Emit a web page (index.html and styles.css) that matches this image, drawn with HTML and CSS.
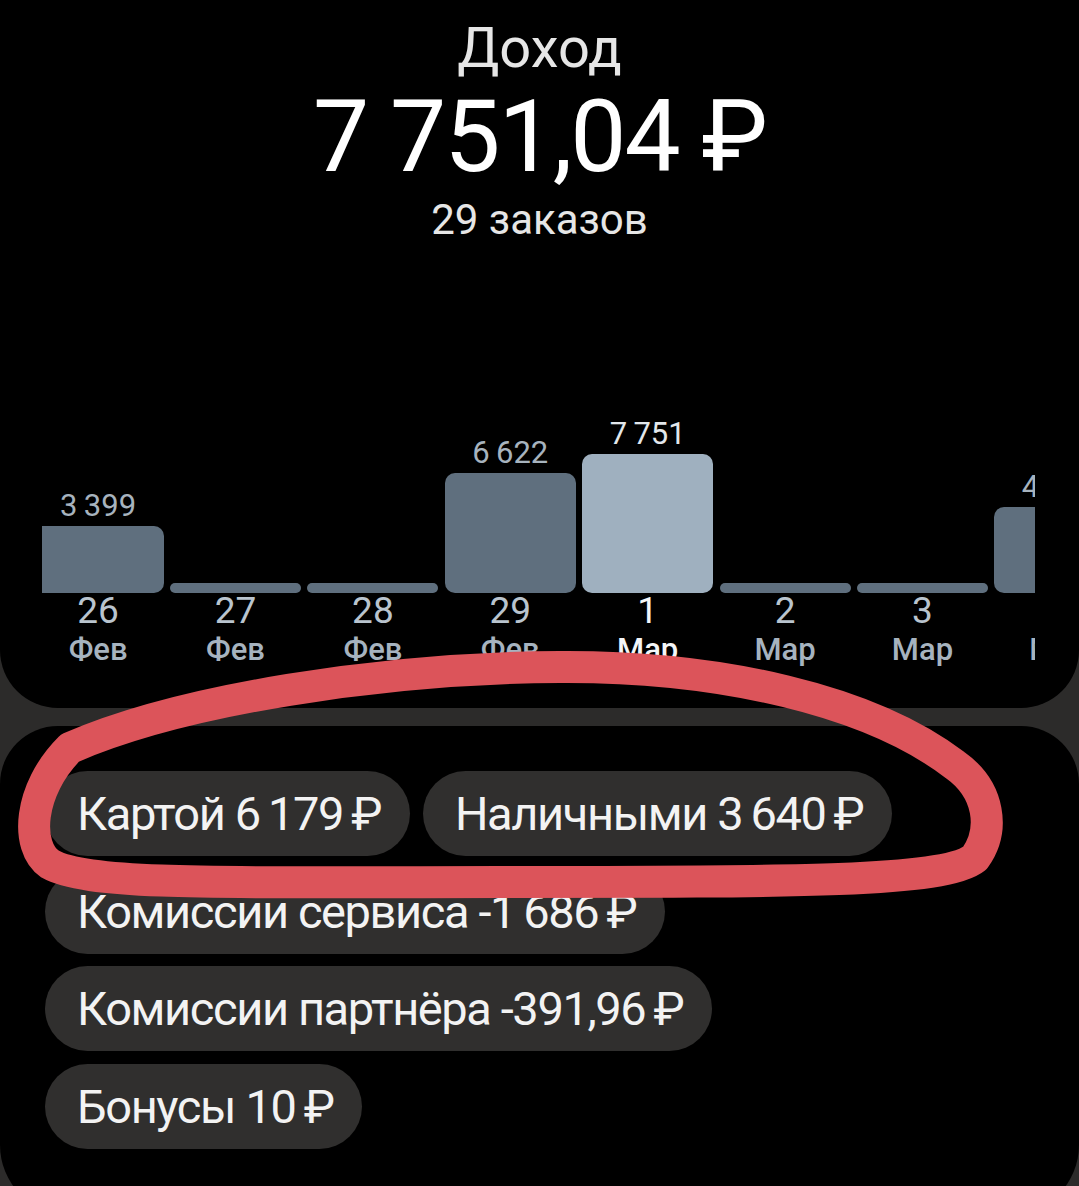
FILE: index.html
```html
<!DOCTYPE html>
<html lang="ru">
<head>
<meta charset="utf-8">
<title>Доход</title>
<link rel="stylesheet" href="styles.css">
</head>
<body>
<section class="summary">
  <div class="title">Доход</div>
  <div class="amount">7 751,04 ₽</div>
  <div class="orders">29 заказов</div>
  <div class="chart">
    <div class="track">
      <div class="col">
        <div class="plot"><div class="val">3&thinsp;399</div><div class="bar" style="height:67px"></div></div>
        <div class="day">26</div><div class="mon">Фев</div>
      </div>
      <div class="col">
        <div class="plot"><div class="bar" style="height:10px"></div></div>
        <div class="day">27</div><div class="mon">Фев</div>
      </div>
      <div class="col">
        <div class="plot"><div class="bar" style="height:10px"></div></div>
        <div class="day">28</div><div class="mon">Фев</div>
      </div>
      <div class="col">
        <div class="plot"><div class="val">6&thinsp;622</div><div class="bar" style="height:120px"></div></div>
        <div class="day">29</div><div class="mon">Фев</div>
      </div>
      <div class="col active">
        <div class="plot"><div class="val">7&thinsp;751</div><div class="bar" style="height:139px"></div></div>
        <div class="day">1</div><div class="mon">Мар</div>
      </div>
      <div class="col">
        <div class="plot"><div class="bar" style="height:10px"></div></div>
        <div class="day">2</div><div class="mon">Мар</div>
      </div>
      <div class="col">
        <div class="plot"><div class="bar" style="height:10px"></div></div>
        <div class="day">3</div><div class="mon">Мар</div>
      </div>
      <div class="col">
        <div class="plot"><div class="val">4&thinsp;567</div><div class="bar" style="height:86px"></div></div>
        <div class="day">4</div><div class="mon">Мар</div>
      </div>
    </div>
  </div>
</section>
<section class="details">
  <div class="chips">
    <div class="chip">Картой 6&thinsp;179&thinsp;₽</div>
    <div class="chip">Наличными 3&thinsp;640&thinsp;₽</div>
    <div class="chip">Комиссии сервиса -1&thinsp;686&thinsp;₽</div>
    <div class="chip">Комиссии партнёра -391,96&thinsp;₽</div>
    <div class="chip">Бонусы 10&thinsp;₽</div>
  </div>
</section>
<svg class="mark" width="1079" height="1186" viewBox="0 0 1079 1186" aria-hidden="true">
  <path d="M 70 748 C 180 700, 380 668, 560 667 C 720 666, 870 700, 955 765 C 990 790, 995 830, 975 858 C 945 882, 800 882, 500 882 C 250 882, 90 887, 50 864 C 25 847, 28 790, 70 748 Z" fill="none" stroke="#dc545a" stroke-width="32" stroke-linecap="round" stroke-linejoin="round"/>
</svg>
</body>
</html>
```

FILE: styles.css
```css
html, body {
  margin: 0;
  padding: 0;
  overflow: hidden;
}
body {
  position: relative;
  width: 1079px;
  height: 1186px;
  background: #2c2b2a;
  font-family: Roboto, "Noto Sans", sans-serif;
  color: #f2f2f2;
}
.summary {
  background: #000;
  border-radius: 0 0 58px 58px;
  padding: 16px 0 40px;
  text-align: center;
}
.title {
  font-size: 56px;
  line-height: 64px;
  color: #e6e6e6;
}
.amount {
  margin-top: 2px;
  font-size: 100px;
  line-height: 110px;
  letter-spacing: -2px;
  color: #fff;
}
.orders {
  margin-top: 3px;
  font-size: 42px;
  line-height: 50px;
  color: #e6e6e6;
}
.chart {
  margin: 148px 44px 0 42px;
  overflow: hidden;
}
.track {
  display: flex;
  gap: 6.4px;
  margin-left: -9.4px;
  width: max-content;
}
.col {
  width: 131px;
  display: flex;
  flex-direction: column;
  align-items: center;
}
.plot {
  height: 200px;
  width: 100%;
  display: flex;
  flex-direction: column;
  justify-content: flex-end;
  align-items: center;
}
.val {
  font-size: 31px;
  line-height: 36px;
  color: #a7b3be;
  margin-bottom: 2px;
  white-space: nowrap;
}
.bar {
  width: 100%;
  background: #5f6f7e;
  border-radius: 10px;
}
.bar[style*="height:10px"] {
  border-radius: 5px;
}
.day {
  font-size: 37px;
  line-height: 36px;
  color: #b9c4ce;
}
.mon {
  margin-top: 3px;
  font-size: 31px;
  line-height: 36px;
  font-weight: 500;
  color: #a6b3bf;
}
.active .val { color: #e2e7eb; }
.active .bar { background: #9fb0bf; }
.active .day,
.active .mon { color: #f4f6f8; }
.details {
  margin-top: 18px;
  background: #000;
  border-radius: 58px 58px 70px 70px;
  padding: 45px 100px 55px 45px;
  height: 389px;
}
.chips {
  display: flex;
  flex-wrap: wrap;
  gap: 12.5px 13px;
}
.chip {
  height: 85px;
  display: flex;
  align-items: center;
  padding: 0 29px 0 32px;
  border-radius: 43px;
  background: #302f2e;
  font-size: 47px;
  letter-spacing: -1.4px;
  color: #f3f3f3;
  white-space: nowrap;
}
.mark {
  position: absolute;
  top: 0;
  left: 0;
  pointer-events: none;
}
```
